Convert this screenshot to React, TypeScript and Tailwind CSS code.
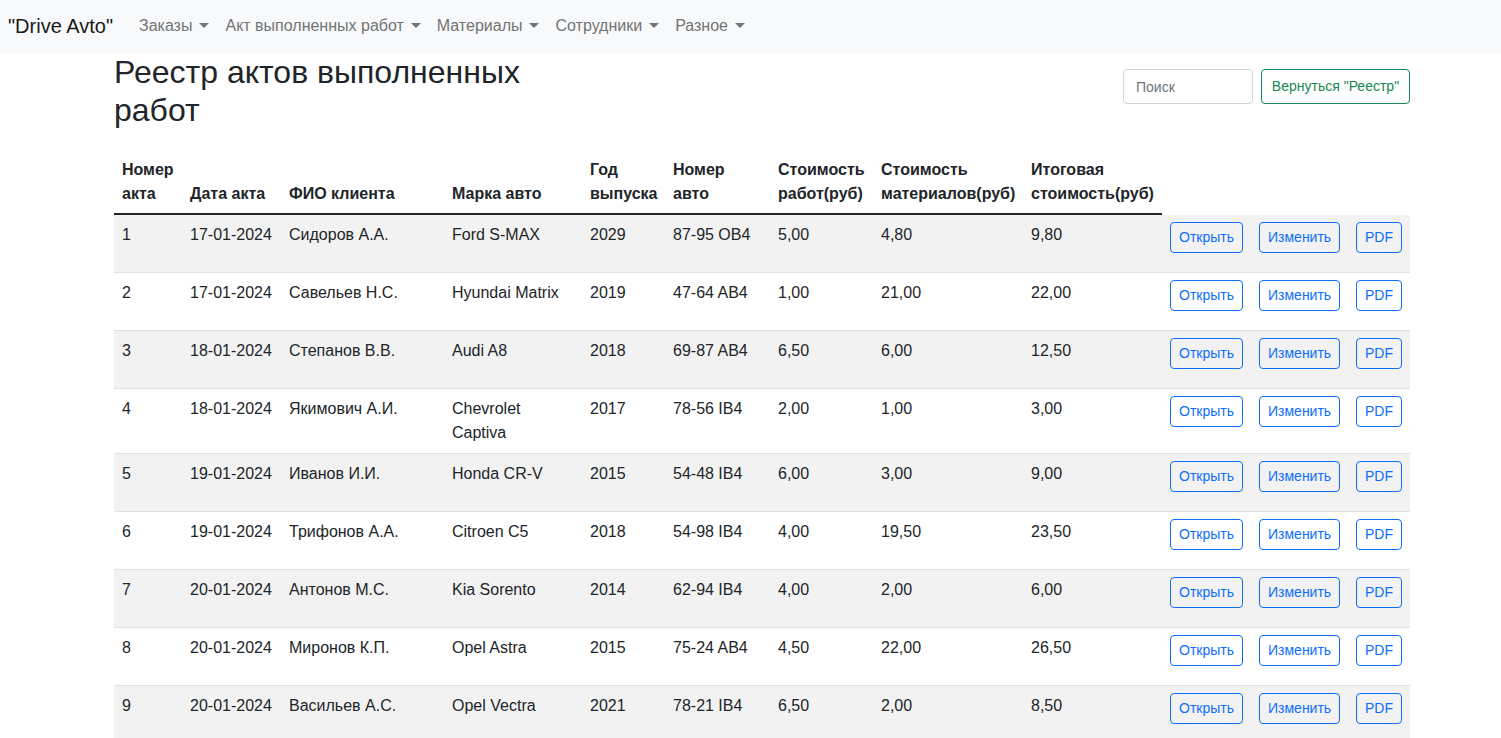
import React from "react";

const rows = [
  ["1", "17-01-2024", "Сидоров А.А.", "Ford S-MAX", "2029", "87-95 OB4", "5,00", "4,80", "9,80"],
  ["2", "17-01-2024", "Савельев Н.С.", "Hyundai Matrix", "2019", "47-64 AB4", "1,00", "21,00", "22,00"],
  ["3", "18-01-2024", "Степанов В.В.", "Audi A8", "2018", "69-87 AB4", "6,50", "6,00", "12,50"],
  ["4", "18-01-2024", "Якимович А.И.", "Chevrolet Captiva", "2017", "78-56 IB4", "2,00", "1,00", "3,00"],
  ["5", "19-01-2024", "Иванов И.И.", "Honda CR-V", "2015", "54-48 IB4", "6,00", "3,00", "9,00"],
  ["6", "19-01-2024", "Трифонов А.А.", "Citroen C5", "2018", "54-98 IB4", "4,00", "19,50", "23,50"],
  ["7", "20-01-2024", "Антонов М.С.", "Kia Sorento", "2014", "62-94 IB4", "4,00", "2,00", "6,00"],
  ["8", "20-01-2024", "Миронов К.П.", "Opel Astra", "2015", "75-24 AB4", "4,50", "22,00", "26,50"],
  ["9", "20-01-2024", "Васильев А.С.", "Opel Vectra", "2021", "78-21 IB4", "6,50", "2,00", "8,50"],
];

const widths = [68, 99, 163, 138, 83, 105, 103, 150, 139, 89, 97, 62];

const Caret = () => (
  <span className="inline-block ml-[7px] w-0 h-0 border-t-[5px] border-t-current border-x-[5px] border-x-transparent" />
);

function NavItem({ label }: { label: string }) {
  return (
    <a className="px-2 py-2 text-[16px] leading-6 text-[#737475] flex items-center whitespace-nowrap">
      {label}
      <Caret />
    </a>
  );
}

function Btn({ label }: { label: string }) {
  return (
    <div className="h-[42px] -mt-px">
      <button className="h-[31px] px-2 text-[14px] leading-[21px] text-[#0d6efd] border border-[#0d6efd] rounded-[4px] bg-transparent whitespace-nowrap">
        {label}
      </button>
    </div>
  );
}

const td = "align-top px-2 py-2 border-b border-[#dee2e6]";

export default function App() {
  return (
    <div className="min-h-screen bg-white text-[#212529]" style={{ fontFamily: '"Liberation Sans", Arial, sans-serif' }}>
      <nav className="h-[53px] bg-[#f8f9fa] flex items-center pl-2 pb-[2px]">
        <span className="text-[20px] leading-[30px] text-[#1a1a1a] mr-[18px] whitespace-nowrap">"Drive Avto"</span>
        <NavItem label="Заказы" />
        <NavItem label="Акт выполненных работ" />
        <NavItem label="Материалы" />
        <NavItem label="Сотрудники" />
        <NavItem label="Разное" />
      </nav>
      <div className="ml-[114px] w-[1296px]">
        <div className="flex justify-between items-start">
          <h2 className="w-[420px] text-[32px] leading-[38.4px] font-normal text-[#212529]">
            Реестр актов выполненных работ
          </h2>
          <div className="mt-[16px] flex gap-2">
            <input
              placeholder="Поиск"
              className="w-[130px] h-[35px] px-3 text-[14px] border border-[#ced4da] rounded-[4px] placeholder:text-[#6c757d] outline-none"
            />
            <button className="w-[149px] h-[35px] text-[14px] text-[#198754] border border-[#198754] rounded-[4px] whitespace-nowrap">
              Вернуться "Реестр"
            </button>
          </div>
        </div>
        <table className="mt-[20px] w-[1296px] table-fixed border-separate border-spacing-0 text-[16px] leading-6">
          <colgroup>
            {widths.map((w, i) => (
              <col key={i} style={{ width: w }} />
            ))}
          </colgroup>
          <thead>
            <tr>
              {[
                "Номер акта",
                "Дата акта",
                "ФИО клиента",
                "Марка авто",
                "Год выпуска",
                "Номер авто",
                "Стоимость работ(руб)",
                "Стоимость материалов(руб)",
                "Итоговая стоимость(руб)",
              ].map((h) => (
                <th key={h} className="text-left align-bottom font-bold px-2 pt-2 pb-[7px] border-b-2 border-[#212529]">
                  {h}
                </th>
              ))}
            </tr>
          </thead>
          <tbody>
            {rows.map((r, i) => (
              <tr key={i} className={i % 2 === 0 ? "bg-[#f2f2f2]" : "bg-white"}>
                {r.map((c, j) => (
                  <td key={j} className={td}>
                    {c}
                  </td>
                ))}
                <td className={td}>
                  <Btn label="Открыть" />
                </td>
                <td className={td}>
                  <Btn label="Изменить" />
                </td>
                <td className={td}>
                  <Btn label="PDF" />
                </td>
              </tr>
            ))}
          </tbody>
        </table>
      </div>
    </div>
  );
}
